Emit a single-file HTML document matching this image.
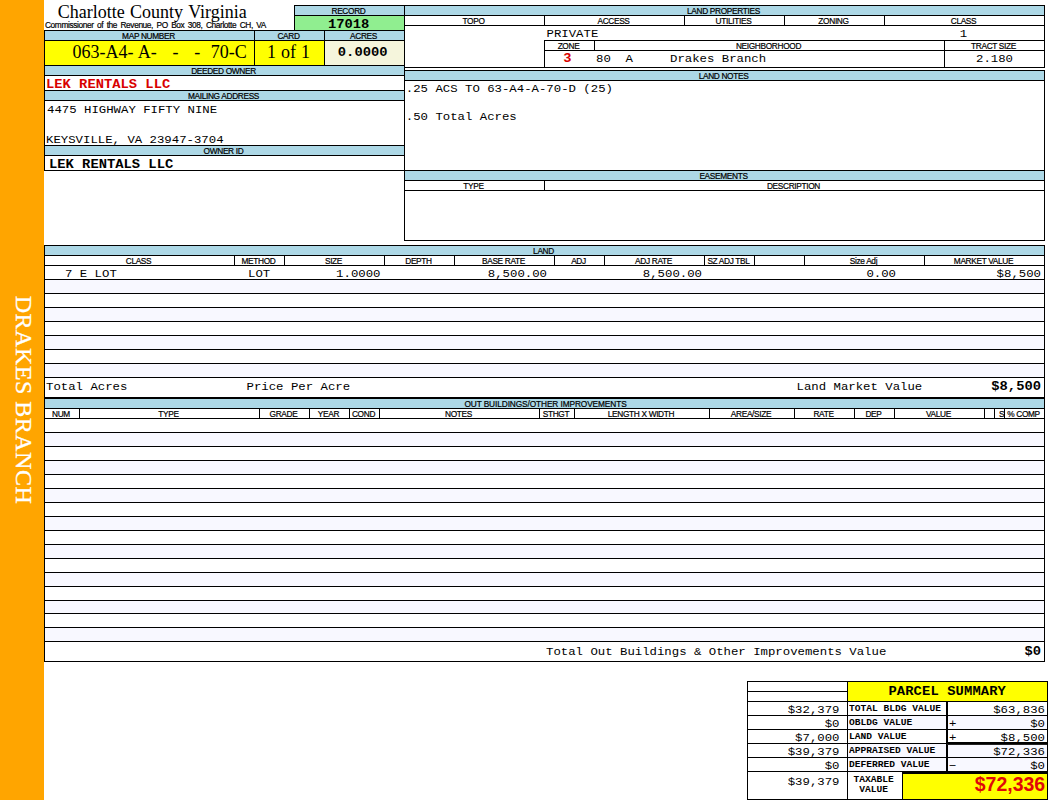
<!DOCTYPE html>
<html lang="en">
<head>
<meta charset="utf-8">
<title>Charlotte County Virginia - Property Card</title>
<style>
html,body{margin:0;padding:0;background:#fff}
body{width:1050px;height:800px;position:relative;overflow:hidden}
.bar{position:absolute;left:0;top:0;width:44px;height:800px;background:#ffa500}
.b{position:absolute;box-sizing:border-box;border:1px solid #000}
.r{position:absolute}
.t{position:absolute;white-space:pre;color:#000}
.f0{font-family:"Liberation Sans", sans-serif;font-size:8.3px;line-height:11px;font-weight:normal}
.f1{font-family:"Liberation Mono", monospace;font-size:13.8px;line-height:18px;font-weight:bold}
.f2{font-family:"Liberation Serif", serif;font-size:18px;line-height:23px;font-weight:normal}
.f3{font-family:"Liberation Mono", monospace;font-size:12.33px;line-height:16px;font-weight:normal}
.f4{font-family:"Liberation Mono", monospace;font-size:9.6px;line-height:12px;font-weight:bold}
.f5{font-family:"Liberation Sans", sans-serif;font-size:19.5px;line-height:25px;font-weight:bold}
.side{position:absolute;left:24px;top:400.1px;width:0;height:0;font-family:"Liberation Serif",serif;font-size:24px;letter-spacing:.5px;line-height:0;color:#fff;white-space:pre;transform:rotate(90deg);display:flex;align-items:center;justify-content:center;-webkit-text-stroke:.3px #fff}

</style>
</head>
<body>
<div class="bar"></div>
<div class="b" style="left:294px;top:5px;width:111px;height:11px;background:#add8e6"></div>
<div class="b" style="left:294px;top:15px;width:111px;height:16px;background:#90ee90"></div>
<div class="b" style="left:44px;top:30px;width:211px;height:11px;background:#add8e6"></div>
<div class="b" style="left:254px;top:30px;width:71px;height:11px;background:#add8e6"></div>
<div class="b" style="left:324px;top:30px;width:81px;height:11px;background:#add8e6"></div>
<div class="b" style="left:44px;top:40px;width:211px;height:26px;background:#ffff00"></div>
<div class="b" style="left:254px;top:40px;width:71px;height:26px;background:#ffff00"></div>
<div class="b" style="left:324px;top:40px;width:81px;height:26px;background:#f5f5dc"></div>
<div class="b" style="left:44px;top:65px;width:361px;height:11px;background:#add8e6"></div>
<div class="b" style="left:44px;top:75px;width:361px;height:16px"></div>
<div class="b" style="left:44px;top:90px;width:361px;height:11px;background:#add8e6"></div>
<div class="b" style="left:44px;top:100px;width:361px;height:46px"></div>
<div class="b" style="left:44px;top:145px;width:361px;height:11px;background:#add8e6"></div>
<div class="b" style="left:44px;top:155px;width:361px;height:16px"></div>
<div class="b" style="left:404px;top:5px;width:641px;height:11px;background:#add8e6"></div>
<div class="b" style="left:404px;top:15px;width:141px;height:11px"></div>
<div class="b" style="left:544px;top:15px;width:141px;height:11px"></div>
<div class="b" style="left:684px;top:15px;width:101px;height:11px"></div>
<div class="b" style="left:784px;top:15px;width:101px;height:11px"></div>
<div class="b" style="left:884px;top:15px;width:161px;height:11px"></div>
<div class="b" style="left:404px;top:25px;width:641px;height:43px"></div>
<div class="b" style="left:544px;top:40px;width:51px;height:11px"></div>
<div class="b" style="left:594px;top:40px;width:351px;height:11px"></div>
<div class="b" style="left:944px;top:40px;width:101px;height:11px"></div>
<div class="b" style="left:544px;top:50px;width:401px;height:18px"></div>
<div class="b" style="left:944px;top:50px;width:101px;height:18px"></div>
<div class="b" style="left:404px;top:70px;width:641px;height:11px;background:#add8e6"></div>
<div class="b" style="left:404px;top:80px;width:641px;height:91px"></div>
<div class="b" style="left:404px;top:170px;width:641px;height:11px;background:#add8e6"></div>
<div class="b" style="left:404px;top:180px;width:141px;height:11px"></div>
<div class="b" style="left:544px;top:180px;width:501px;height:11px"></div>
<div class="b" style="left:404px;top:190px;width:641px;height:51px"></div>
<div class="b" style="left:44px;top:245px;width:1001px;height:11px;background:#add8e6"></div>
<div class="b" style="left:44px;top:255px;width:191px;height:11px"></div>
<div class="b" style="left:234px;top:255px;width:51px;height:11px"></div>
<div class="b" style="left:284px;top:255px;width:101px;height:11px"></div>
<div class="b" style="left:384px;top:255px;width:71px;height:11px"></div>
<div class="b" style="left:454px;top:255px;width:101px;height:11px"></div>
<div class="b" style="left:554px;top:255px;width:51px;height:11px"></div>
<div class="b" style="left:604px;top:255px;width:101px;height:11px"></div>
<div class="b" style="left:704px;top:255px;width:51px;height:11px"></div>
<div class="b" style="left:754px;top:255px;width:51px;height:11px"></div>
<div class="b" style="left:804px;top:255px;width:121px;height:11px"></div>
<div class="b" style="left:924px;top:255px;width:121px;height:11px"></div>
<div class="b" style="left:44px;top:265px;width:1001px;height:15px"></div>
<div class="b" style="left:44px;top:279px;width:1001px;height:15px;background:#f8f8ff"></div>
<div class="b" style="left:44px;top:293px;width:1001px;height:15px"></div>
<div class="b" style="left:44px;top:307px;width:1001px;height:15px;background:#f8f8ff"></div>
<div class="b" style="left:44px;top:321px;width:1001px;height:15px"></div>
<div class="b" style="left:44px;top:335px;width:1001px;height:15px;background:#f8f8ff"></div>
<div class="b" style="left:44px;top:349px;width:1001px;height:15px"></div>
<div class="b" style="left:44px;top:363px;width:1001px;height:15px;background:#f8f8ff"></div>
<div class="b" style="left:44px;top:377px;width:1001px;height:21px"></div>
<div class="b" style="left:44px;top:398px;width:1001px;height:11px;background:#add8e6"></div>
<div class="b" style="left:44px;top:408px;width:36px;height:11px"></div>
<div class="b" style="left:79px;top:408px;width:181px;height:11px"></div>
<div class="b" style="left:259px;top:408px;width:51px;height:11px"></div>
<div class="b" style="left:309px;top:408px;width:41px;height:11px"></div>
<div class="b" style="left:349px;top:408px;width:31px;height:11px"></div>
<div class="b" style="left:379px;top:408px;width:161px;height:11px"></div>
<div class="b" style="left:539px;top:408px;width:36px;height:11px"></div>
<div class="b" style="left:574px;top:408px;width:136px;height:11px"></div>
<div class="b" style="left:709px;top:408px;width:86px;height:11px"></div>
<div class="b" style="left:794px;top:408px;width:61px;height:11px"></div>
<div class="b" style="left:854px;top:408px;width:41px;height:11px"></div>
<div class="b" style="left:894px;top:408px;width:91px;height:11px"></div>
<div class="b" style="left:984px;top:408px;width:11px;height:11px"></div>
<div class="b" style="left:994px;top:408px;width:11px;height:11px"></div>
<div class="b" style="left:1004px;top:408px;width:41px;height:11px"></div>
<div class="b" style="left:44px;top:418px;width:1001px;height:15px"></div>
<div class="b" style="left:44px;top:432px;width:1001px;height:15px;background:#f8f8ff"></div>
<div class="b" style="left:44px;top:446px;width:1001px;height:15px"></div>
<div class="b" style="left:44px;top:460px;width:1001px;height:15px;background:#f8f8ff"></div>
<div class="b" style="left:44px;top:474px;width:1001px;height:15px"></div>
<div class="b" style="left:44px;top:488px;width:1001px;height:15px;background:#f8f8ff"></div>
<div class="b" style="left:44px;top:502px;width:1001px;height:15px"></div>
<div class="b" style="left:44px;top:516px;width:1001px;height:15px;background:#f8f8ff"></div>
<div class="b" style="left:44px;top:530px;width:1001px;height:15px"></div>
<div class="b" style="left:44px;top:544px;width:1001px;height:15px;background:#f8f8ff"></div>
<div class="b" style="left:44px;top:558px;width:1001px;height:15px"></div>
<div class="b" style="left:44px;top:572px;width:1001px;height:15px;background:#f8f8ff"></div>
<div class="b" style="left:44px;top:586px;width:1001px;height:15px"></div>
<div class="b" style="left:44px;top:600px;width:1001px;height:14px;background:#f8f8ff"></div>
<div class="b" style="left:44px;top:613px;width:1001px;height:15px"></div>
<div class="b" style="left:44px;top:627px;width:1001px;height:15px;background:#f8f8ff"></div>
<div class="b" style="left:44px;top:641px;width:1001px;height:21px"></div>
<div class="b" style="left:747px;top:681px;width:101px;height:11px"></div>
<div class="b" style="left:747px;top:691px;width:101px;height:11px"></div>
<div class="b" style="left:847px;top:681px;width:201px;height:21px;background:#ffff00"></div>
<div class="b" style="left:747px;top:701px;width:101px;height:15px"></div>
<div class="b" style="left:847px;top:701px;width:101px;height:15px"></div>
<div class="b" style="left:947px;top:701px;width:101px;height:15px"></div>
<div class="b" style="left:747px;top:715px;width:101px;height:15px"></div>
<div class="b" style="left:847px;top:715px;width:101px;height:15px;background:#f8f8ff"></div>
<div class="b" style="left:947px;top:715px;width:101px;height:15px;background:#f8f8ff"></div>
<div class="b" style="left:747px;top:729px;width:101px;height:15px"></div>
<div class="b" style="left:847px;top:729px;width:101px;height:15px"></div>
<div class="b" style="left:947px;top:729px;width:101px;height:15px"></div>
<div class="b" style="left:747px;top:743px;width:101px;height:15px"></div>
<div class="b" style="left:847px;top:743px;width:101px;height:15px;background:#f8f8ff"></div>
<div class="b" style="left:947px;top:743px;width:101px;height:15px;background:#f8f8ff"></div>
<div class="b" style="left:747px;top:757px;width:101px;height:15px"></div>
<div class="b" style="left:847px;top:757px;width:101px;height:15px;background:#f8f8ff"></div>
<div class="b" style="left:947px;top:757px;width:101px;height:15px;background:#f8f8ff"></div>
<div class="b" style="left:747px;top:771px;width:101px;height:29px"></div>
<div class="b" style="left:847px;top:771px;width:57px;height:29px"></div>
<div class="b" style="left:902px;top:771px;width:146px;height:29px;background:#ffff00"></div>
<div class="r" style="left:44px;top:397px;width:1001px;height:2px;background:#000"></div>
<div class="r" style="left:946px;top:701px;width:2px;height:71px;background:#000"></div>
<div class="r" style="left:947px;top:742px;width:100px;height:2px;background:#000"></div>
<div class="r" style="left:947px;top:744px;width:100px;height:1px;background:#222"></div>
<div class="r" style="left:902px;top:771px;width:145px;height:3px;background:#000"></div>
<div class="t f0" style="top:6.00px;left:348.5px;transform:translateX(-50%);letter-spacing:-.33px;-webkit-text-stroke:.2px #000">RECORD</div>
<div class="t f1" style="top:16.00px;left:348.6px;transform-origin:50% 12.00px;transform:translateX(-50%) scaleY(0.9)">17018</div>
<div class="t f0" style="top:31.00px;left:148.5px;transform:translateX(-50%);letter-spacing:-.33px;-webkit-text-stroke:.2px #000">MAP NUMBER</div>
<div class="t f0" style="top:31.00px;left:288.5px;transform:translateX(-50%);letter-spacing:-.33px;-webkit-text-stroke:.2px #000">CARD</div>
<div class="t f0" style="top:31.00px;left:363.5px;transform:translateX(-50%);letter-spacing:-.33px;-webkit-text-stroke:.2px #000">ACRES</div>
<div class="t f2" style="top:40.60px;left:72.6px;word-spacing:.75px">063-A4- A-   -   -  70-C</div>
<div class="t f2" style="top:40.60px;left:288.5px;transform:translateX(-50%);word-spacing:.5px">1 of 1</div>
<div class="t f1" style="top:44.00px;left:362.7px;transform-origin:50% 12.00px;transform:translateX(-50%) scaleY(0.9)">0.0000</div>
<div class="t f0" style="top:66.00px;left:223.5px;transform:translateX(-50%);letter-spacing:-.33px;-webkit-text-stroke:.2px #000">DEEDED OWNER</div>
<div class="t f1" style="top:76.00px;left:46px;transform-origin:50% 12.00px;transform:scaleY(0.9);color:#d80000">LEK RENTALS LLC</div>
<div class="t f0" style="top:91.00px;left:223.5px;transform:translateX(-50%);letter-spacing:-.33px;-webkit-text-stroke:.2px #000">MAILING ADDRESS</div>
<div class="t f3" style="top:102.00px;left:47px;transform-origin:50% 11.00px;transform:scaleY(0.93)">4475 HIGHWAY FIFTY NINE</div>
<div class="t f3" style="top:132.00px;left:46px;transform-origin:50% 11.00px;transform:scaleY(0.93)">KEYSVILLE, VA 23947-3704</div>
<div class="t f0" style="top:146.00px;left:223.5px;transform:translateX(-50%);letter-spacing:-.33px;-webkit-text-stroke:.2px #000">OWNER ID</div>
<div class="t f1" style="top:156.00px;left:49px;transform-origin:50% 12.00px;transform:scaleY(0.9)">LEK RENTALS LLC</div>
<div class="t f2" style="top:1.00px;left:57.7px;word-spacing:.9px">Charlotte County Virginia</div>
<div class="t f0" style="top:20.00px;left:45px;letter-spacing:-.37px;-webkit-text-stroke:.2px #000;word-spacing:1.5px">Commissioner of the Revenue, PO Box 308, Charlotte CH, VA</div>
<div class="t f0" style="top:6.00px;left:723.5px;transform:translateX(-50%);letter-spacing:-.33px;-webkit-text-stroke:.2px #000">LAND PROPERTIES</div>
<div class="t f0" style="top:16.00px;left:473.5px;transform:translateX(-50%);letter-spacing:-.33px;-webkit-text-stroke:.2px #000">TOPO</div>
<div class="t f0" style="top:16.00px;left:613.5px;transform:translateX(-50%);letter-spacing:-.33px;-webkit-text-stroke:.2px #000">ACCESS</div>
<div class="t f0" style="top:16.00px;left:733.5px;transform:translateX(-50%);letter-spacing:-.33px;-webkit-text-stroke:.2px #000">UTILITIES</div>
<div class="t f0" style="top:16.00px;left:833.5px;transform:translateX(-50%);letter-spacing:-.33px;-webkit-text-stroke:.2px #000">ZONING</div>
<div class="t f0" style="top:16.00px;left:963.5px;transform:translateX(-50%);letter-spacing:-.33px;-webkit-text-stroke:.2px #000">CLASS</div>
<div class="t f3" style="top:26.00px;left:546.5px;transform-origin:50% 11.00px;transform:scaleY(0.93)">PRIVATE</div>
<div class="t f3" style="top:26.00px;left:963.5px;transform-origin:50% 11.00px;transform:translateX(-50%) scaleY(0.93)">1</div>
<div class="t f0" style="top:41.00px;left:568.5px;transform:translateX(-50%);letter-spacing:-.33px;-webkit-text-stroke:.2px #000">ZONE</div>
<div class="t f0" style="top:41.00px;left:768.5px;transform:translateX(-50%);letter-spacing:-.33px;-webkit-text-stroke:.2px #000">NEIGHBORHOOD</div>
<div class="t f0" style="top:41.00px;left:993.5px;transform:translateX(-50%);letter-spacing:-.33px;-webkit-text-stroke:.2px #000">TRACT SIZE</div>
<div class="t f1" style="top:50.00px;left:567.5px;transform-origin:50% 12.00px;transform:translateX(-50%) scaleY(0.9);color:#d80000">3</div>
<div class="t f3" style="top:51.00px;left:596px;transform-origin:50% 11.00px;transform:scaleY(0.93)">80  A     Drakes Branch</div>
<div class="t f3" style="top:51.00px;left:994.5px;transform-origin:50% 11.00px;transform:translateX(-50%) scaleY(0.93)">2.180</div>
<div class="t f0" style="top:71.00px;left:723.5px;transform:translateX(-50%);letter-spacing:-.33px;-webkit-text-stroke:.2px #000">LAND NOTES</div>
<div class="t f3" style="top:81.00px;left:405.8px;transform-origin:50% 11.00px;transform:scaleY(0.93)">.25 ACS TO 63-A4-A-70-D (25)</div>
<div class="t f3" style="top:109.00px;left:405.8px;transform-origin:50% 11.00px;transform:scaleY(0.93)">.50 Total Acres</div>
<div class="t f0" style="top:171.00px;left:723.5px;transform:translateX(-50%);letter-spacing:-.33px;-webkit-text-stroke:.2px #000">EASEMENTS</div>
<div class="t f0" style="top:181.00px;left:473.5px;transform:translateX(-50%);letter-spacing:-.33px;-webkit-text-stroke:.2px #000">TYPE</div>
<div class="t f0" style="top:181.00px;left:793.5px;transform:translateX(-50%);letter-spacing:-.33px;-webkit-text-stroke:.2px #000">DESCRIPTION</div>
<div class="t f0" style="top:246.00px;left:543.5px;transform:translateX(-50%);letter-spacing:-.33px;-webkit-text-stroke:.2px #000">LAND</div>
<div class="t f0" style="top:256.00px;left:138.5px;transform:translateX(-50%);letter-spacing:-.33px;-webkit-text-stroke:.2px #000">CLASS</div>
<div class="t f0" style="top:256.00px;left:258.5px;transform:translateX(-50%);letter-spacing:-.33px;-webkit-text-stroke:.2px #000">METHOD</div>
<div class="t f0" style="top:256.00px;left:333.5px;transform:translateX(-50%);letter-spacing:-.33px;-webkit-text-stroke:.2px #000">SIZE</div>
<div class="t f0" style="top:256.00px;left:418.5px;transform:translateX(-50%);letter-spacing:-.33px;-webkit-text-stroke:.2px #000">DEPTH</div>
<div class="t f0" style="top:256.00px;left:503.5px;transform:translateX(-50%);letter-spacing:-.33px;-webkit-text-stroke:.2px #000">BASE RATE</div>
<div class="t f0" style="top:256.00px;left:578.5px;transform:translateX(-50%);letter-spacing:-.33px;-webkit-text-stroke:.2px #000">ADJ</div>
<div class="t f0" style="top:256.00px;left:653.5px;transform:translateX(-50%);letter-spacing:-.33px;-webkit-text-stroke:.2px #000">ADJ RATE</div>
<div class="t f0" style="top:256.00px;left:728.5px;transform:translateX(-50%);letter-spacing:-.33px;-webkit-text-stroke:.2px #000">SZ ADJ TBL</div>
<div class="t f0" style="top:256.00px;left:863.5px;transform:translateX(-50%);letter-spacing:-.33px;-webkit-text-stroke:.2px #000">Size Adj</div>
<div class="t f0" style="top:256.00px;left:983.5px;transform:translateX(-50%);letter-spacing:-.33px;-webkit-text-stroke:.2px #000">MARKET VALUE</div>
<div class="t f3" style="top:266.00px;left:65px;transform-origin:50% 11.00px;transform:scaleY(0.93)">7 E LOT</div>
<div class="t f3" style="top:266.00px;left:248px;transform-origin:50% 11.00px;transform:scaleY(0.93)">LOT</div>
<div class="t f3" style="top:266.00px;right:669.5px;transform-origin:50% 11.00px;transform:scaleY(0.93)">1.0000</div>
<div class="t f3" style="top:266.00px;right:503px;transform-origin:50% 11.00px;transform:scaleY(0.93)">8,500.00</div>
<div class="t f3" style="top:266.00px;right:348px;transform-origin:50% 11.00px;transform:scaleY(0.93)">8,500.00</div>
<div class="t f3" style="top:266.00px;right:154px;transform-origin:50% 11.00px;transform:scaleY(0.93)">0.00</div>
<div class="t f3" style="top:266.00px;right:9px;transform-origin:50% 11.00px;transform:scaleY(0.93)">$8,500</div>
<div class="t f3" style="top:379.00px;left:46px;transform-origin:50% 11.00px;transform:scaleY(0.93)">Total Acres</div>
<div class="t f3" style="top:379.00px;left:246.5px;transform-origin:50% 11.00px;transform:scaleY(0.93)">Price Per Acre</div>
<div class="t f3" style="top:379.00px;left:796.5px;transform-origin:50% 11.00px;transform:scaleY(0.93)">Land Market Value</div>
<div class="t f1" style="top:378.00px;right:9px;transform-origin:50% 12.00px;transform:scaleY(0.9)">$8,500</div>
<div class="t f0" style="top:399.00px;left:545.5px;transform:translateX(-50%);letter-spacing:-.1px;-webkit-text-stroke:.2px #000">OUT BUILDINGS/OTHER IMPROVEMENTS</div>
<div class="t f0" style="top:409.00px;left:61px;transform:translateX(-50%);letter-spacing:-.33px;-webkit-text-stroke:.2px #000">NUM</div>
<div class="t f0" style="top:409.00px;left:168.5px;transform:translateX(-50%);letter-spacing:-.33px;-webkit-text-stroke:.2px #000">TYPE</div>
<div class="t f0" style="top:409.00px;left:283.5px;transform:translateX(-50%);letter-spacing:-.33px;-webkit-text-stroke:.2px #000">GRADE</div>
<div class="t f0" style="top:409.00px;left:328.5px;transform:translateX(-50%);letter-spacing:-.33px;-webkit-text-stroke:.2px #000">YEAR</div>
<div class="t f0" style="top:409.00px;left:363.5px;transform:translateX(-50%);letter-spacing:-.33px;-webkit-text-stroke:.2px #000">COND</div>
<div class="t f0" style="top:409.00px;left:458.5px;transform:translateX(-50%);letter-spacing:-.33px;-webkit-text-stroke:.2px #000">NOTES</div>
<div class="t f0" style="top:409.00px;left:556px;transform:translateX(-50%);letter-spacing:-.33px;-webkit-text-stroke:.2px #000">STHGT</div>
<div class="t f0" style="top:409.00px;left:641px;transform:translateX(-50%);letter-spacing:-.33px;-webkit-text-stroke:.2px #000">LENGTH X WIDTH</div>
<div class="t f0" style="top:409.00px;left:751px;transform:translateX(-50%);letter-spacing:-.33px;-webkit-text-stroke:.2px #000">AREA/SIZE</div>
<div class="t f0" style="top:409.00px;left:823.5px;transform:translateX(-50%);letter-spacing:-.33px;-webkit-text-stroke:.2px #000">RATE</div>
<div class="t f0" style="top:409.00px;left:873.5px;transform:translateX(-50%);letter-spacing:-.33px;-webkit-text-stroke:.2px #000">DEP</div>
<div class="t f0" style="top:409.00px;left:938.5px;transform:translateX(-50%);letter-spacing:-.33px;-webkit-text-stroke:.2px #000">VALUE</div>
<div class="t f0" style="top:409.00px;left:1023.5px;transform:translateX(-50%);letter-spacing:-.33px;-webkit-text-stroke:.2px #000">% COMP</div>
<div class="t f0" style="top:409.00px;right:45.7px;letter-spacing:-.33px;-webkit-text-stroke:.2px #000">S</div>
<div class="t f3" style="top:644.00px;left:546px;transform-origin:50% 11.00px;transform:scaleY(0.93)">Total Out Buildings &amp; Other Improvements Value</div>
<div class="t f1" style="top:643.00px;right:9px;transform-origin:50% 12.00px;transform:scaleY(0.9)">$0</div>
<div class="t f1" style="top:683.00px;left:947.2px;transform-origin:50% 12.00px;transform:translateX(-50%) scaleY(0.9);letter-spacing:0.12px">PARCEL SUMMARY</div>
<div class="t f3" style="top:702.00px;right:210.5px;transform-origin:50% 11.00px;transform:scaleY(0.93)">$32,379</div>
<div class="t f4" style="top:703.00px;left:849px;transform-origin:50% 8.00px;transform:scaleY(0.9)">TOTAL BLDG VALUE</div>
<div class="t f3" style="top:702.00px;right:5px;transform-origin:50% 11.00px;transform:scaleY(0.93)">$63,836</div>
<div class="t f3" style="top:716.00px;right:210.5px;transform-origin:50% 11.00px;transform:scaleY(0.93)">$0</div>
<div class="t f4" style="top:717.00px;left:849px;transform-origin:50% 8.00px;transform:scaleY(0.9)">OBLDG VALUE</div>
<div class="t f3" style="top:716.00px;right:5px;transform-origin:50% 11.00px;transform:scaleY(0.93)">$0</div>
<div class="t f3" style="top:716.00px;left:949px;transform-origin:50% 11.00px;transform:scaleY(0.93)">+</div>
<div class="t f3" style="top:730.00px;right:210.5px;transform-origin:50% 11.00px;transform:scaleY(0.93)">$7,000</div>
<div class="t f4" style="top:731.00px;left:849px;transform-origin:50% 8.00px;transform:scaleY(0.9)">LAND VALUE</div>
<div class="t f3" style="top:730.00px;right:5px;transform-origin:50% 11.00px;transform:scaleY(0.93)">$8,500</div>
<div class="t f3" style="top:730.00px;left:949px;transform-origin:50% 11.00px;transform:scaleY(0.93)">+</div>
<div class="t f3" style="top:744.00px;right:210.5px;transform-origin:50% 11.00px;transform:scaleY(0.93)">$39,379</div>
<div class="t f4" style="top:745.00px;left:849px;transform-origin:50% 8.00px;transform:scaleY(0.9)">APPRAISED VALUE</div>
<div class="t f3" style="top:744.00px;right:5px;transform-origin:50% 11.00px;transform:scaleY(0.93)">$72,336</div>
<div class="t f3" style="top:758.00px;right:210.5px;transform-origin:50% 11.00px;transform:scaleY(0.93)">$0</div>
<div class="t f4" style="top:759.00px;left:849px;transform-origin:50% 8.00px;transform:scaleY(0.9)">DEFERRED VALUE</div>
<div class="t f3" style="top:758.00px;right:5px;transform-origin:50% 11.00px;transform:scaleY(0.93)">$0</div>
<div class="t f3" style="top:758.00px;left:949px;transform-origin:50% 11.00px;transform:scaleY(0.93)">−</div>
<div class="t f3" style="top:774.00px;right:210.5px;transform-origin:50% 11.00px;transform:scaleY(0.93)">$39,379</div>
<div class="t f4" style="top:774.00px;left:873.6px;transform-origin:50% 8.00px;transform:translateX(-50%) scaleY(0.9)">TAXABLE</div>
<div class="t f4" style="top:784.00px;left:873.6px;transform-origin:50% 8.00px;transform:translateX(-50%) scaleY(0.9)">VALUE</div>
<div class="t f5" style="top:772.00px;right:4.8px;color:#e00808">$72,336</div>
<div class="side">DRAKES BRANCH</div>

</body>
</html>
